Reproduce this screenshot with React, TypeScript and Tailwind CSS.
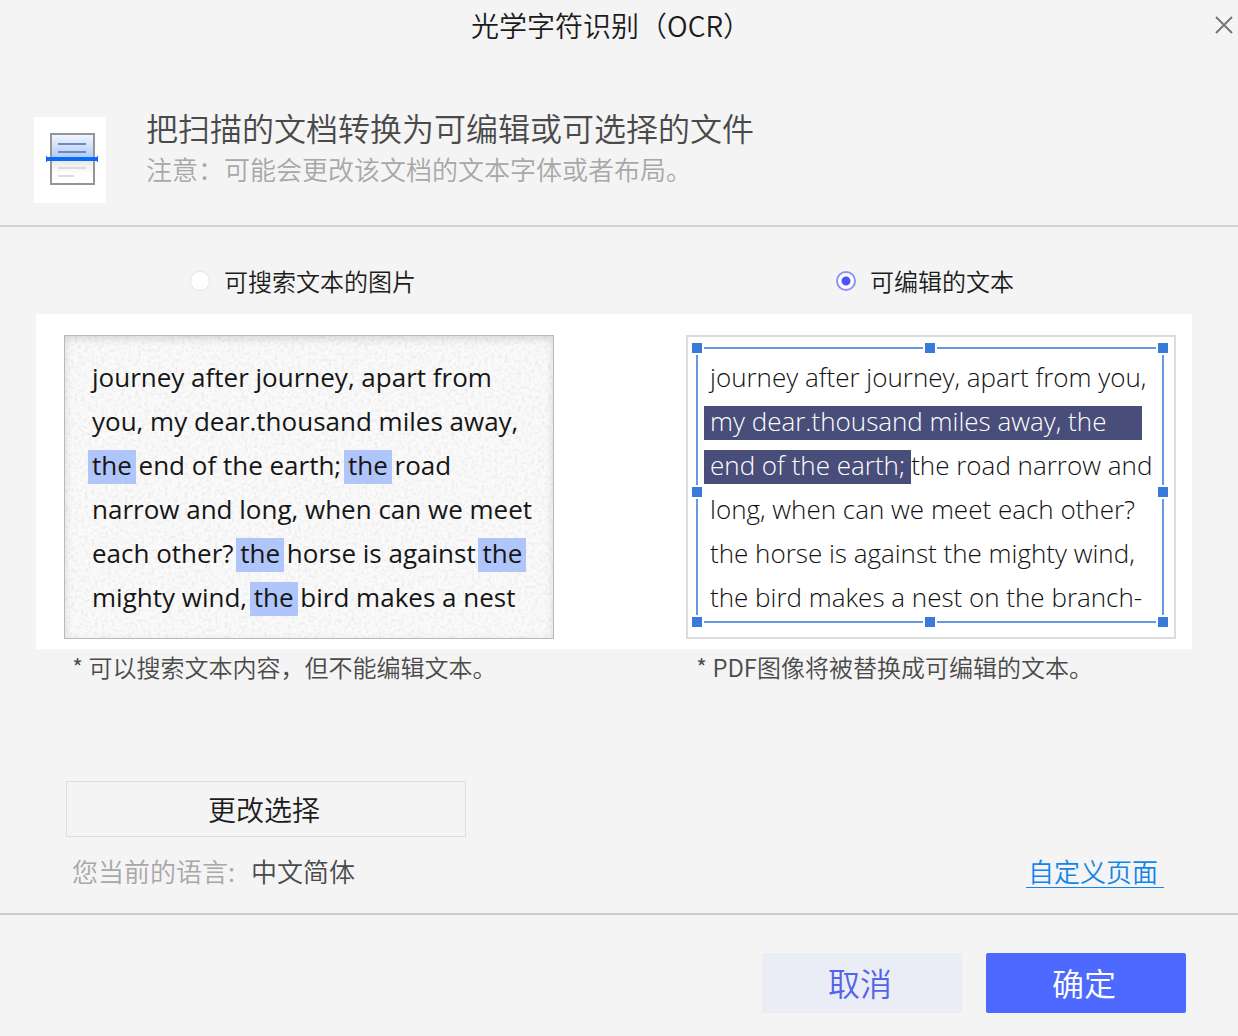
import { useState } from "react";
import type { ReactNode } from "react";

type Mode = "searchable" | "editable";

function ScanIcon() {
  return (
    <svg viewBox="0 0 72 86" className="h-[86px] w-[72px] shrink-0 bg-white" aria-hidden="true">
      <defs>
        <linearGradient id="scan-top" x1="0" y1="0" x2="0" y2="1">
          <stop offset="0" stopColor="#f4f7fd" />
          <stop offset="1" stopColor="#a9c8fb" />
        </linearGradient>
        <linearGradient id="scan-bottom" x1="0" y1="0" x2="0" y2="1">
          <stop offset="0" stopColor="#e6e6e6" />
          <stop offset="0.6" stopColor="#ffffff" />
        </linearGradient>
      </defs>
      <rect x="17" y="17" width="43" height="25" fill="url(#scan-top)" />
      <rect x="17" y="42" width="43" height="25" fill="url(#scan-bottom)" />
      <rect x="17" y="17" width="43" height="50" fill="none" stroke="#959595" strokeWidth="2" />
      <path d="M24 27h28M24 35h28" stroke="#6f8bbb" strokeWidth="2" />
      <path d="M24 51h28M24 59h16" stroke="#dcdcdc" strokeWidth="2" />
      <path d="M12 42h52" stroke="#0a6cf5" strokeWidth="4" />
      <path d="M12.5 39v6M63.5 39v6" stroke="#0a6cf5" strokeWidth="1" />
    </svg>
  );
}

function Option({ value, mode, onPick, children }: { value: Mode; mode: Mode; onPick: (m: Mode) => void; children: ReactNode }) {
  return (
    <label className="flex cursor-pointer items-center justify-center gap-3.5 pr-3 text-2xl leading-9 text-[#1c1c1c]">
      <input
        type="radio"
        name="ocr-mode"
        value={value}
        checked={mode === value}
        onChange={() => onPick(value)}
        className="size-5 shrink-0 appearance-none rounded-full border border-[#e4e4ea] bg-white checked:border-2 checked:border-[#8d93f6] checked:bg-[radial-gradient(circle,#4a55fa_0,#4a55fa_4px,#ffffff_5px)]"
      />
      {children}
    </label>
  );
}

function Line({ children }: { children: ReactNode }) {
  return <p className="whitespace-nowrap">{children}</p>;
}

function Hit() {
  return <mark className="-mx-1 inline-block bg-[#b0c5f9] px-1 pb-1 leading-[30px] text-inherit">the</mark>;
}

function ScannedPreview() {
  return (
    <div className="relative h-[304px] border border-[#b9b9b9] bg-[#fafafa] pt-[19px] pl-[27px] font-['Open_Sans',sans-serif] text-[26px] leading-[44px] font-normal text-[#161616]">
      <svg className="absolute inset-0 size-full opacity-15" aria-hidden="true">
        <filter id="grain">
          <feTurbulence type="fractalNoise" baseFrequency="0.3" numOctaves="2" seed="4" />
          <feColorMatrix values="0 0 0 0 0.4  0 0 0 0 0.4  0 0 0 0 0.4  3 0 0 0 -1.3" />
        </filter>
        <rect width="100%" height="100%" filter="url(#grain)" />
      </svg>
      <div className="absolute inset-0 shadow-[inset_0_3px_8px_rgba(0,0,0,0.14)]" />
      <div className="relative">
        <Line>journey after journey, apart from</Line>
        <Line>you, my dear.thousand miles away,</Line>
        <Line><Hit /> end of the earth; <Hit /> road</Line>
        <Line>narrow and long, when can we meet</Line>
        <Line>each other? <Hit /> horse is against <Hit /></Line>
        <Line>mighty wind, <Hit /> bird makes a nest</Line>
      </div>
    </div>
  );
}

const handles = [
  "-top-2 -left-2",
  "-top-2 left-1/2 -translate-x-1/2",
  "-top-2 -right-2",
  "top-[136px] -left-2",
  "top-[136px] -right-2",
  "-bottom-2 -left-2",
  "-bottom-2 left-1/2 -translate-x-1/2",
  "-bottom-2 -right-2",
];

function EditablePreview() {
  return (
    <div className="h-[304px] border-2 border-[#dcdcdc] bg-white pt-2.5 pr-2.5 pl-2">
      <div className="relative h-[276px] border-2 border-[#6699dd] pt-1.5 pl-3 font-['Open_Sans',sans-serif] text-[26px] leading-[44px] text-[#111111]">
        {handles.map((place) => (
          <span key={place} className={`absolute size-3.5 border-2 border-white bg-[#3a7bd9] ${place}`} />
        ))}
        <Line>journey after journey, apart from you,</Line>
        <Line><span className="-ml-1.5 inline-block bg-[#484d7a] pr-9 pb-1 pl-1.5 leading-[30px] text-white">my dear.thousand miles away, the</span></Line>
        <Line><span className="-ml-1.5 inline-block bg-[#484d7a] pr-1.5 pb-1 pl-1.5 leading-[30px] text-white">end of the earth;</span>the road narrow and</Line>
        <Line>long, when can we meet each other?</Line>
        <Line>the horse is against the mighty wind,</Line>
        <Line>the bird makes a nest on the branch-</Line>
      </div>
    </div>
  );
}

export default function App() {
  const [mode, setMode] = useState<Mode>("editable");
  return (
    <main className="flex min-h-screen flex-col bg-[#f4f4f4] font-['Noto_Sans_CJK_SC',sans-serif] font-[350] text-[#4a4a4a]">
      <header className="flex h-[50px] items-center pr-1 pl-2">
        <h1 className="flex-1 text-center text-[28px] leading-10 text-[#1c1c1c]">光学字符识别（OCR）</h1>
        <button type="button" aria-label="关闭" className="flex size-5 items-center justify-center">
          <svg viewBox="0 0 20 20" className="size-5" aria-hidden="true">
            <path d="M2 2L18 18M18 2L2 18" stroke="#777777" strokeWidth="2" />
          </svg>
        </button>
      </header>

      <section className="flex h-[177px] items-start gap-10 border-b-2 border-[#d3d3d3] pt-14 pl-[34px]">
        <div className="pt-[11px]"><ScanIcon /></div>
        <div>
          <h2 className="text-[32px] leading-[42px]">把扫描的文档转换为可编辑或可选择的文件</h2>
          <p className="text-[26px] leading-[42px] text-[#a8a8a8]">注意：可能会更改该文档的文本字体或者布局。</p>
        </div>
      </section>

      <section className="pt-9 pr-[46px] pl-9">
        <div className="grid grid-cols-2 gap-[132px] pr-4 pb-[15px] pl-7">
          <Option value="searchable" mode={mode} onPick={setMode}>可搜索文本的图片</Option>
          <Option value="editable" mode={mode} onPick={setMode}>可编辑的文本</Option>
        </div>
        <div className="grid grid-cols-2 gap-[132px] bg-white pt-[21px] pr-4 pb-2.5 pl-7">
          <ScannedPreview />
          <EditablePreview />
        </div>
        <div className="grid grid-cols-2 gap-[132px] pr-4 pl-7 text-2xl leading-9">
          <p className="pl-2 whitespace-nowrap">* 可以搜索文本内容，但不能编辑文本。</p>
          <p className="pl-2.5 whitespace-nowrap">* PDF图像将被替换成可编辑的文本。</p>
        </div>
      </section>

      <section className="flex flex-1 flex-col justify-end border-b-2 border-[#cccccc] pr-[74px] pb-[22px] pl-[66px]">
        <button type="button" className="h-14 w-[400px] border border-[#dedede] pr-1 text-[28px] text-[#1c1c1c]">更改选择</button>
        <div className="flex items-center justify-between pt-3.5 pl-1.5 text-[26px] leading-10">
          <p className="flex gap-4"><span className="text-[#a8a8a8]">您当前的语言:</span><span>中文简体</span></p>
          <a href="#pages" className="border-b border-[#1586e8] pr-1.5 pl-0.5 leading-8 text-[#1586e8]">自定义页面</a>
        </div>
      </section>

      <footer className="flex justify-end gap-6 pt-[38px] pr-[52px] pb-[23px] text-[32px]">
        <button type="button" className="h-[60px] w-[200px] rounded-xs bg-[#eaedf6] pr-1 pb-0.5 text-[#5363ea]">取消</button>
        <button type="button" className="h-[60px] w-[200px] rounded-xs bg-[#4d69ff] pr-1 pb-0.5 text-white">确定</button>
      </footer>
    </main>
  );
}
